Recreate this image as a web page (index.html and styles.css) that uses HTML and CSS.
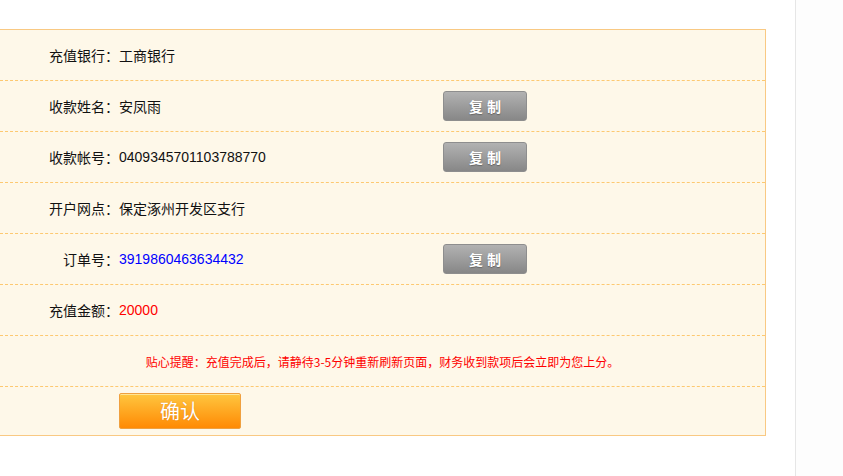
FILE: index.html
```html
<!DOCTYPE html>
<html lang="zh-CN">
<head>
<meta charset="utf-8">
<title>充值信息</title>
<link rel="stylesheet" href="styles.css">
</head>
<body>
<div class="page">
  <div class="main">
    <div class="box">
      <div class="row">
        <div class="label">充值银行：</div>
        <div class="value">工商银行</div>
      </div>
      <div class="row">
        <div class="label">收款姓名：</div>
        <div class="value">安凤雨</div>
        <button class="copy">复制</button>
      </div>
      <div class="row">
        <div class="label">收款帐号：</div>
        <div class="value">0409345701103788770</div>
        <button class="copy">复制</button>
      </div>
      <div class="row">
        <div class="label">开户网点：</div>
        <div class="value">保定涿州开发区支行</div>
      </div>
      <div class="row">
        <div class="label">订单号：</div>
        <div class="value blue">3919860463634432</div>
        <button class="copy">复制</button>
      </div>
      <div class="row">
        <div class="label">充值金额：</div>
        <div class="value red">20000</div>
      </div>
      <div class="row notice">贴心提醒：充值完成后，请静待3-5分钟重新刷新页面，财务收到款项后会立即为您上分。</div>
      <div class="row last">
        <div class="label"></div>
        <button class="confirm">确认</button>
      </div>
    </div>
  </div>
  <div class="side"></div>
</div>
</body>
</html>
```

FILE: styles.css
```css
html, body {
  margin: 0;
  padding: 0;
  background: #ffffff;
}

body {
  font-family: "Liberation Sans", "Noto Sans CJK SC", sans-serif;
  font-size: 14px;
  color: #111;
}

.page {
  display: flex;
  min-height: 476px;
  overflow: hidden;
}

.main {
  width: 796px;
  border-right: 1px solid #e6e6e6;
  box-sizing: border-box;
  flex: none;
}

.side {
  flex: 1;
  background: #fdfdfd;
}

.box {
  box-sizing: border-box;
  width: 767px;
  margin-top: 29px;
  margin-left: -1px;
  border: 1px solid #f9c983;
  background: #fef8e9;
}

.row {
  display: grid;
  grid-template-columns: 119px 324px 84px;
  align-items: center;
  height: 50px;
  border-bottom: 1px dashed #fdc971;
}

.label {
  text-align: right;
}

.value {
  white-space: nowrap;
}

.blue {
  color: #0000ff;
}

.red {
  color: #ff0000;
}

.copy {
  box-sizing: border-box;
  width: 84px;
  height: 30px;
  margin: 0;
  padding: 0 0 0 4px;
  border: 1px solid #8e8e8e;
  border-radius: 3px;
  background: linear-gradient(#b2b2b2, #878787);
  color: #fff;
  font-family: "Noto Sans CJK SC", sans-serif;
  font-size: 14px;
  font-weight: bold;
  letter-spacing: 4px;
  line-height: 28px;
  text-shadow: 0 1px 1px rgba(60, 60, 60, 0.5);
}

.notice {
  display: flex;
  justify-content: center;
  color: #ff0000;
  font-size: 12px;
  font-family: "Noto Sans CJK SC", sans-serif;
}

.row.last {
  height: 48px;
  border-bottom: none;
  grid-template-columns: 119px 122px;
}

.confirm {
  box-sizing: border-box;
  width: 122px;
  height: 36px;
  margin: 0;
  padding: 0;
  border: 1px solid #efa03f;
  border-radius: 2px;
  background: linear-gradient(#ffc63f, #ff8a04);
  box-shadow: inset 0 1px 0 rgba(255, 236, 170, 0.8);
  color: #fff;
  font-family: "Noto Sans CJK SC", sans-serif;
  font-size: 20px;
  font-weight: normal;
  line-height: 34px;
  text-shadow: 0 0 1px rgba(190, 90, 0, 0.6);
}
```
